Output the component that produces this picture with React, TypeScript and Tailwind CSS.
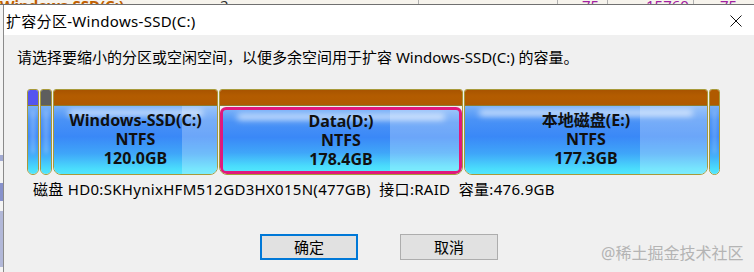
import React from "react";

const FONT = "font-['Noto_Sans','Noto_Sans_CJK_SC',sans-serif]";

function Small({ top, w }: { top: string; w: string }) {
  return (
    <div className={`${w} flex flex-col rounded-t-[3px] rounded-b-[6px] border border-[#a89a3a] overflow-hidden`}>
      <div className={`h-[16px] ${top} border-b border-[#8c7a30]`} />
      <div className="relative flex-1 bg-[linear-gradient(to_bottom,#78b0f8_0%,#4a92f6_20%,#3a88f7_45%,#3fa6f9_70%,#4adcfc_92%,#50e6fd_100%)]">
        <div className="absolute top-[4px] bottom-[20px] left-[3px] right-[3px] bg-white/30 blur-[2px] rounded-full" />
      </div>
    </div>
  );
}

function Big({
  w,
  name,
  size,
  free,
  selected,
}: {
  w: string;
  name: string;
  size: string;
  free: string;
  selected?: boolean;
}) {
  return (
    <div className={`${w} flex flex-col rounded-t-[3px] rounded-b-[8px] border border-[#a89a3a] overflow-hidden`}>
      <div className="h-[16px] bg-[linear-gradient(to_bottom,#a85400,#b35c00_40%,#b05a00)] border-b border-[#8c7a30]" />
      <div
        className={`relative flex-1 overflow-hidden bg-[linear-gradient(to_bottom,#78b0f8_0%,#4a92f6_20%,#3a88f7_45%,#3fa6f9_70%,#4adcfc_92%,#50e6fd_100%)] ${
          selected ? "border-[3px] border-[#e0187c] rounded-[6px] mt-[1px]" : ""
        }`}
      >
        <div className={`absolute top-0 bottom-0 right-0 ${free} bg-white/25`} />
        <div className="absolute top-[4px] left-[14px] right-[14px] h-[6px] bg-white/70 blur-[3px] rounded-full" />
        <div
          className={`relative flex flex-col items-center text-[16px] font-bold leading-[19px] text-[#101010] ${
            selected ? "pt-[2px]" : "pt-[5px]"
          }`}
        >
          <span>{name}</span>
          <span>NTFS</span>
          <span>{size}</span>
        </div>
      </div>
    </div>
  );
}

export default function App() {
  return (
    <div className={`w-[754px] h-[272px] overflow-hidden flex flex-col bg-[#f0f0f0] ${FONT}`}>
      {/* background window strip */}
      <div className="h-[5px] shrink-0 overflow-hidden bg-[#f6f3ec] border-b border-[#707070]">
        <div className="flex items-end h-[5px] text-[15px] leading-[18px] whitespace-nowrap">
          <div className="w-[126px] shrink-0 font-bold text-[#c06000] mb-[-9px]">Windows-SSD(C:)</div>
          <div className="w-[292px] shrink-0 pl-[94px] text-[#303030] mb-[-9px]">2</div>
          <div className="w-[89px] shrink-0 border-l border-[#b0b0b0] h-[5px]" />
          <div className="w-[50px] shrink-0 border-l border-[#b0b0b0] text-[#a020a0] pl-[36px] mb-[-9px]" />
          <div className="w-[50px] shrink-0 border-l border-[#b0b0b0] text-[#a020a0] pl-[24px] mb-[-9px]">75</div>
          <div className="w-[86px] shrink-0 border-l border-[#b0b0b0] text-[#a020a0] pl-[38px] mb-[-9px]">15760</div>
          <div className="flex-1 border-l border-[#b0b0b0] text-[#a020a0] pl-[26px] mb-[-9px]">75</div>
        </div>
      </div>
      <div className="flex flex-1">
        {/* left strip of background window */}
        <div className="w-[3px] shrink-0 bg-[#f4f4f4] flex flex-col">
          <div className="h-[150px]" />
          <div className="h-[6px] bg-[#5060b0]/50" />
          <div className="h-[22px]" />
          <div className="h-[18px] bg-[#4050b0]/60" />
          <div className="h-[10px]" />
          <div className="h-[56px] bg-[#5060b0]/40" />
        </div>
        {/* dialog */}
        <div className="flex-1 flex flex-col border-l border-[#8a8a8a]">
          <div className="h-[30px] shrink-0 bg-white flex items-center justify-between pl-[2px] pr-[12px]">
            <span className="text-[15px] text-[#000] leading-[20px] mt-[2px] tracking-[0.3px]">扩容分区-Windows-SSD(C:)</span>
            <svg width="12" height="12" viewBox="0 0 12 12" className="mt-[2px]">
              <path d="M0.5 0.5 L11.5 11.5 M11.5 0.5 L0.5 11.5" stroke="#111" strokeWidth="1" fill="none" />
            </svg>
          </div>
          <div className="flex-1 flex flex-col bg-[#f0f0f0]">
            <div className="pl-[13px] pt-[12px] text-[15px] leading-[20px] text-[#000] whitespace-nowrap">
              请选择要缩小的分区或空闲空间，以便多余空间用于扩容 Windows-SSD(C:) 的容量。
            </div>
            <div className="flex gap-[1px] pl-[23px] mt-[22px] h-[86px]">
              <Small w="w-[12px]" top="bg-[#5454f0]" />
              <Small w="w-[12px]" top="bg-[#5e5e5e]" />
              <Big w="w-[165px]" name="Windows-SSD(C:)" size="120.0GB" free="w-[35px]" />
              <Big w="w-[244px]" name="Data(D:)" size="178.4GB" free="w-[69px]" selected />
              <Big w="w-[244px]" name="本地磁盘(E:)" size="177.3GB" free="w-[67px]" />
              <Small w="w-[11px]" top="bg-[#b05a00]" />
            </div>
            <div className="pl-[29px] mt-[4px] text-[15px] leading-[20px] text-[#000] whitespace-nowrap tracking-[0.3px]">
              磁盘 HD0:SKHynixHFM512GD3HX015N(477GB)&nbsp;&nbsp;接口:RAID&nbsp;&nbsp;容量:476.9GB
            </div>
            <div className="flex items-start pl-[256px] mt-[35px]">
              <button className="w-[98px] h-[26px] bg-[#e1e1e1] border-2 border-[#0078d7] text-[15px] leading-[20px] text-[#000]">
                确定
              </button>
              <button className="ml-[42px] w-[98px] h-[26px] bg-[#e1e1e1] border border-[#adadad] text-[15px] leading-[20px] text-[#000]">
                取消
              </button>
              <span className="ml-[103px] mt-[9px] text-[16px] leading-[20px] text-[#b4b4b4] whitespace-nowrap">
                @稀土掘金技术社区
              </span>
            </div>
          </div>
        </div>
      </div>
    </div>
  );
}
